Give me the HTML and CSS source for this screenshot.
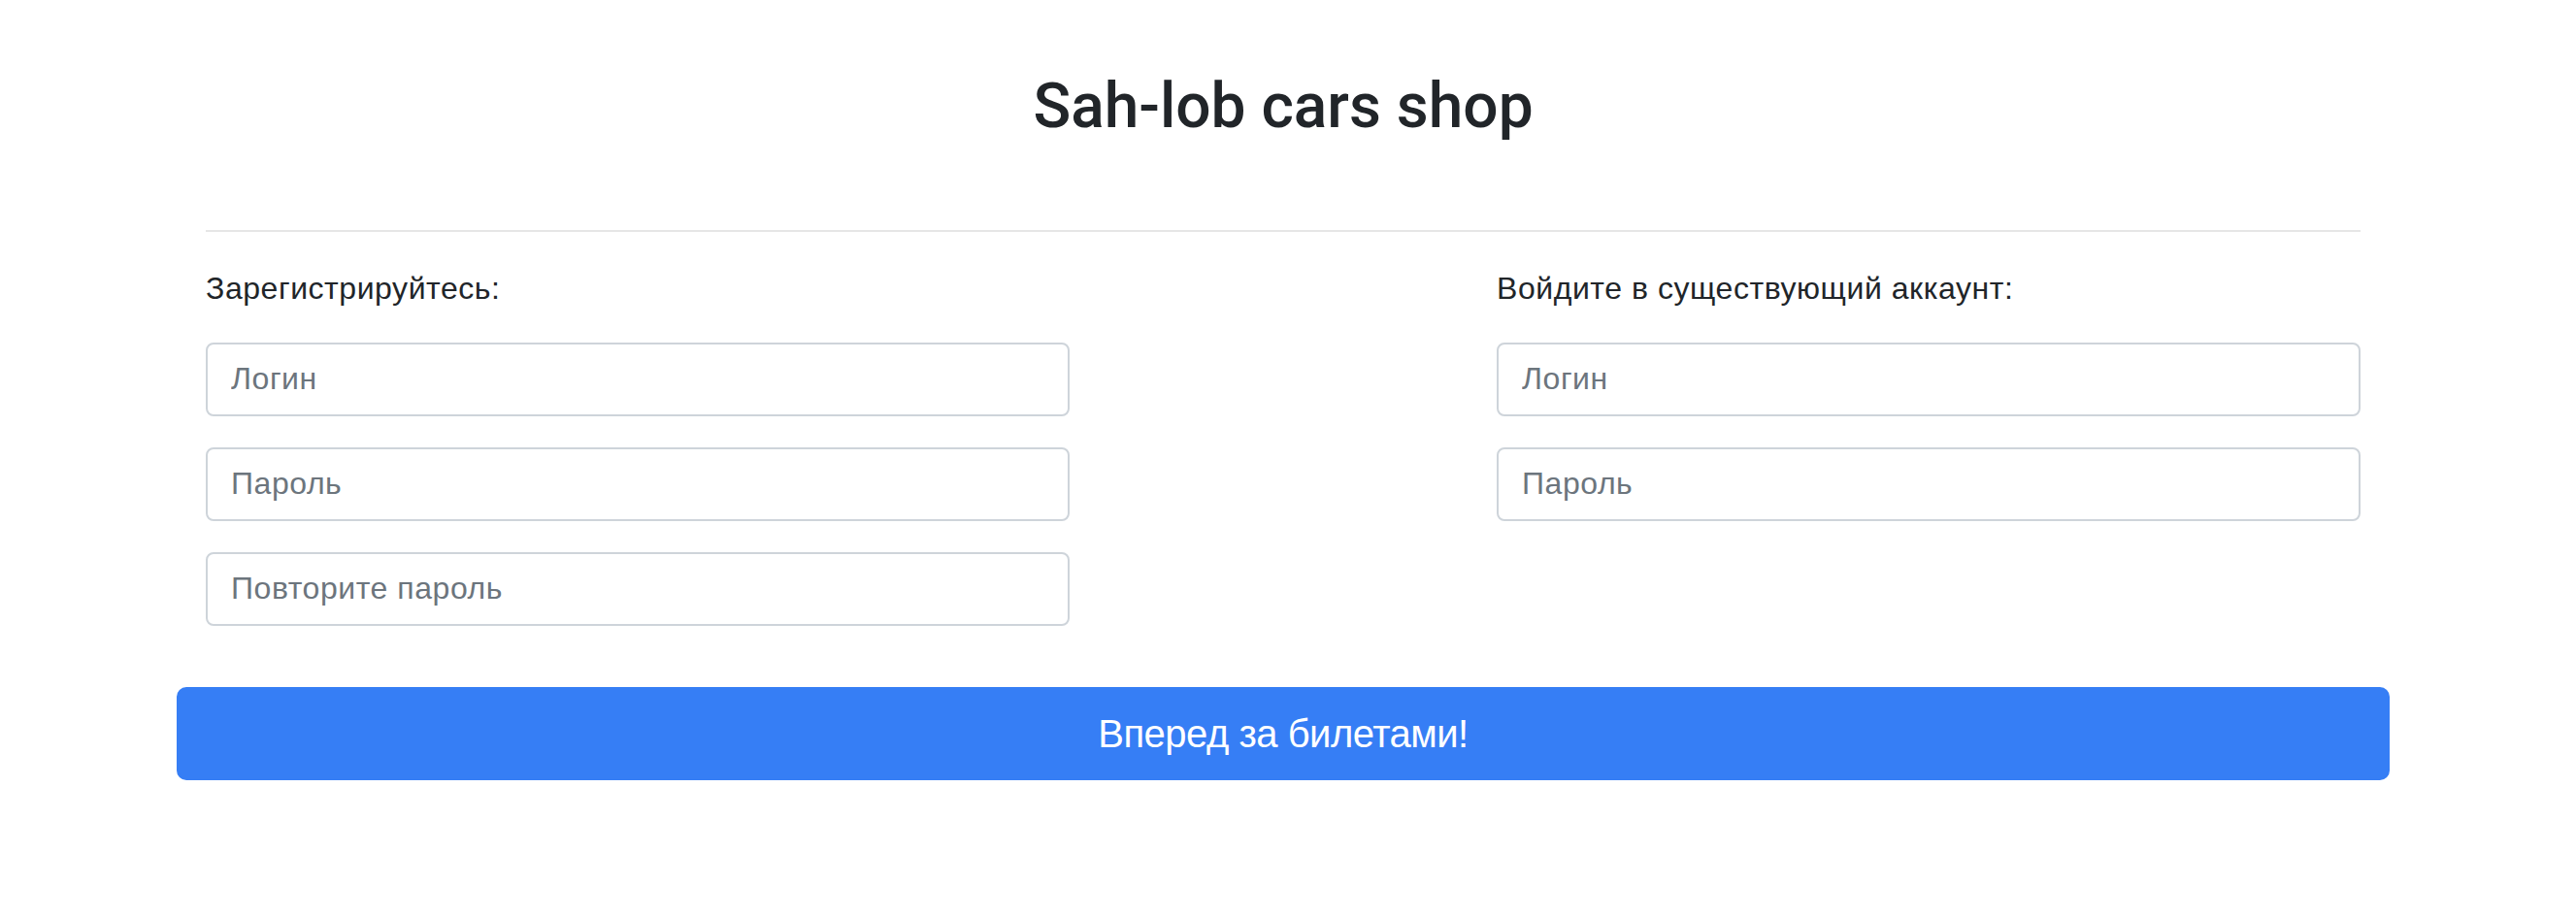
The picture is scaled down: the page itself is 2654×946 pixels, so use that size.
FILE: index.html
```html
<!DOCTYPE html>
<html lang="ru">
<head>
<meta charset="utf-8">
<title>Sah-lob cars shop</title>
<link rel="stylesheet" href="styles.css">
</head>
<body>
<div class="container">
  <h1 class="title">Sah-lob cars shop</h1>
  <div class="inner">
    <hr class="divider">
    <div class="forms">
      <div class="col">
        <p class="label">Зарегистрируйтесь:</p>
        <input class="field" type="text" placeholder="Логин">
        <input class="field" type="password" placeholder="Пароль">
        <input class="field" type="password" placeholder="Повторите пароль">
      </div>
      <div class="col">
        <p class="label">Войдите в существующий аккаунт:</p>
        <input class="field" type="text" placeholder="Логин">
        <input class="field" type="password" placeholder="Пароль">
      </div>
    </div>
  </div>
  <button class="btn" type="button">Вперед за билетами!</button>
</div>
</body>
</html>
```
FILE: styles.css
```css
* { box-sizing: border-box; }
html, body { background: #fff; }
body {
  margin: 0;
  padding-right: 10px;
  font-family: "Liberation Sans", Arial, sans-serif;
  color: #212529;
}
.container {
  width: 2280px;
  margin: 0 auto;
}
.title {
  margin: 72px 0 0;
  font-family: Roboto, "Liberation Sans", sans-serif;
  font-size: 64px;
  line-height: 1.2;
  font-weight: 500;
  text-align: center;
  color: #212529;
}
.inner {
  padding: 0 30px;
}
.divider {
  margin: 88px 0 0;
  border: 0;
  border-top: 2px solid #e6e6e6;
  height: 0;
}
.forms {
  display: flex;
  justify-content: space-between;
  margin-top: 34px;
}
.col {
  width: 890px;
  display: flex;
  flex-direction: column;
  gap: 32px;
}
.label {
  margin: 0;
  font-size: 32px;
  line-height: 48px;
  letter-spacing: 0.55px;
  color: #212529;
}
.field {
  display: block;
  width: 100%;
  height: 76px;
  padding: 12px 24px;
  font-family: inherit;
  font-size: 32px;
  line-height: 48px;
  letter-spacing: 0.55px;
  color: #495057;
  background: #fff;
  border: 2px solid #ced4da;
  border-radius: 8px;
  outline: none;
}
.field::placeholder { color: #6c757d; opacity: 1; }
.btn {
  display: block;
  width: 100%;
  height: 96px;
  margin-top: 63px;
  padding: 16px 32px;
  font-family: inherit;
  font-size: 40px;
  line-height: 60px;
  letter-spacing: -0.5px;
  color: #fff;
  background: #367ef5;
  border: 2px solid #367ef5;
  border-radius: 10px;
  text-align: center;
  cursor: pointer;
}
```
